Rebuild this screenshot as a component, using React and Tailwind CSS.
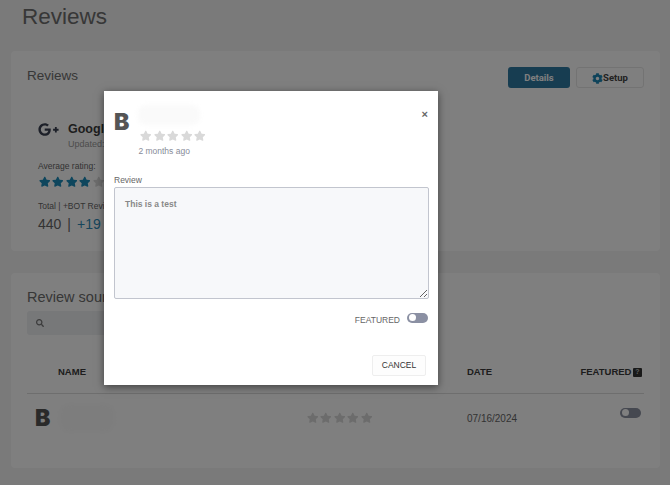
import { FaCog, FaGooglePlusG, FaSearch, FaStar } from 'react-icons/fa';

const SANS = 'font-["Liberation_Sans",Arial,sans-serif]';

// five stars, filled count gets the blue colour
const Stars = ({ filled = 0, size = 11.5, gap = 'gap-[1.9px]' }) => (
  <div className={`flex items-center ${gap}`}>
    {[0, 1, 2, 3, 4].map((i) => (
      <FaStar key={i} size={size} className={i < filled ? 'text-[#1d8cba]' : 'text-[#d9d9d9]'} />
    ))}
  </div>
);

const Toggle = ({ className }) => (
  <div className={`flex h-[10px] w-[21px] items-center rounded-full pl-[2px] ${className}`}>
    <div className="h-[7px] w-[7px] rounded-full bg-white" />
  </div>
);

const BLogo = () => (
  <span className='font-["Inter",sans-serif] text-[23px] leading-none font-black text-[#555]'>B</span>
);

const SummaryCard = () => (
  <section className="flex h-[200px] flex-col rounded-sm bg-white px-4 pt-[16px]">
    <div className="flex items-start justify-between">
      <h2 className="mt-px text-[13.5px] leading-4 text-[#6e6e6e]">Reviews</h2>
      <div className='flex gap-[6px] font-["Roboto",sans-serif] text-[9.5px] font-bold'>
        <button className="h-[21px] w-[62px] rounded-[3px] bg-[#2f7aa3] pt-px text-white">Details</button>
        <button className="flex h-[21px] w-[68px] items-center justify-center rounded-[3px] border border-[#e6e6e6] pt-px text-[#444]">
          <FaCog size={11} className="text-[#1d86b5]" />
          <span>Setup</span>
        </button>
      </div>
    </div>

    <div className="mt-[34px] pl-[11px]">
      <div className="flex items-start gap-[9px]">
        <FaGooglePlusG size={21} className="-mt-[3px] text-[#3a4152]" />
        <div>
          <div className="text-[12.5px] leading-[14px] font-bold text-[#3d3d3d]">Google</div>
          <div className="mt-[2px] text-[9px] leading-[12px] text-[#9a9a9a]">Updated:</div>
        </div>
      </div>
      <div className="mt-[11px] text-[8.5px] leading-[10px] text-[#666]">Average rating:</div>
      <div className="mt-[5px] pl-px">
        <Stars filled={4} />
      </div>
      <div className="mt-[13px] text-[8.5px] leading-[10px] text-[#666]">Total | +BOT Reviews</div>
      <div className="mt-[4px] flex gap-[6px] text-[14px] leading-[18px] text-[#666]">
        <span>440</span>
        <span>|</span>
        <span className="text-[#2d8bb8]">+19</span>
      </div>
    </div>
  </section>
);

const SourcesCard = () => (
  <section className="flex h-[195px] flex-col rounded-sm bg-white px-4 pt-[16px]">
    <h2 className="text-[14.5px] leading-4 text-[#6e6e6e]">Review sources</h2>
    <div className="mt-[6px] flex h-[24px] w-[200px] items-center rounded-[3px] bg-[#eef0f3] pl-[9px]">
      <FaSearch size={8} className="text-[#777]" />
    </div>
    <div className="mt-[31px] grid h-[28px] grid-cols-[280px_160px_1fr] items-start border-b border-[#dcdcdc] pr-[2px] text-[9.5px] leading-3 font-bold text-[#3a3a3a]">
      <span className="pl-[31px]">NAME</span>
      <span />
      <div className="flex items-center justify-between">
        <span>DATE</span>
        <div className="flex items-center gap-[1.5px]">
          <span>FEATURED</span>
          <span className="flex h-[9px] w-[9px] items-center justify-center rounded-[1px] bg-[#333] text-[7px] text-[#bbb]">?</span>
        </div>
      </div>
    </div>
    <div className="grid grid-cols-[280px_160px_1fr] items-center pt-[9px] pr-[3px]">
      <div className="flex items-center gap-2 pl-2">
        <BLogo />
        <div className="h-[30px] w-[58px] rounded-xl bg-[#fbfbfb] blur-[2px]" />
      </div>
      <div className="-mt-px">
        <Stars />
      </div>
      <div className="flex items-start justify-between">
        <span className="text-[10px] text-[#666]">07/16/2024</span>
        <Toggle className="-mt-[3px] bg-[#8b90a0]" />
      </div>
    </div>
  </section>
);

const ReviewModal = () => (
  <div className="absolute top-[91px] left-[104px] flex h-[294px] w-[334px] flex-col bg-white px-[10px] shadow-[0_2px_8px_rgba(0,0,0,0.5)]">
    <button className="absolute top-[17px] right-[10px] text-[11px] leading-3 font-bold text-[#666]">×</button>
    <div className="mt-[14px] flex gap-[9px]">
      <div className="pt-[6px]">
        <BLogo />
      </div>
      <div>
        <div className="h-[20px] w-[62px] rounded-lg bg-[#fafafa] blur-[2px]" />
        <div className="mt-[5px] pl-[2px]">
          <Stars />
        </div>
        <div className="mt-[3px] text-[8.5px] leading-[12px] text-[#878b99]">2 months ago</div>
      </div>
    </div>
    <label className="mt-[17px] text-[8.5px] leading-[12px] text-[#666]">Review</label>
    <textarea
      readOnly
      value="This is a test"
      className="mt-px h-[112px] w-[315px] rounded-[2px] border border-[#c2c5ce] bg-[#f7f8fa] px-[10px] py-[10px] text-[8.5px] font-bold text-[#888] outline-none"
    />
    <div className="mt-[14px] flex items-start justify-end gap-[7px]">
      <span className="mt-px text-[8.5px] leading-[12px] text-[#666]">FEATURED</span>
      <Toggle className="bg-[#8b90a3]" />
    </div>
    <div className="mt-[29px] flex justify-end pr-[2px]">
      <button className="h-[21px] w-[54px] rounded-[2px] border border-[#eeeeee] bg-[#fdfdfd] text-[8.5px] text-[#333]">CANCEL</button>
    </div>
  </div>
);

export default function App() {
  return (
    <div className={`relative h-[485px] w-[670px] overflow-hidden bg-[#f4f4f4] ${SANS}`}>
      <div className="flex flex-col pr-[10px] pl-[11px]">
        <h1 className="pt-[3px] pl-[11px] text-[22.5px] leading-[27px] text-[#6e6e6e]">Reviews</h1>
        <div className="mt-[21px] flex flex-col gap-[22px]">
          <SummaryCard />
          <SourcesCard />
        </div>
      </div>
      <div className="absolute inset-0 bg-black/50" />
      <ReviewModal />
    </div>
  );
}
